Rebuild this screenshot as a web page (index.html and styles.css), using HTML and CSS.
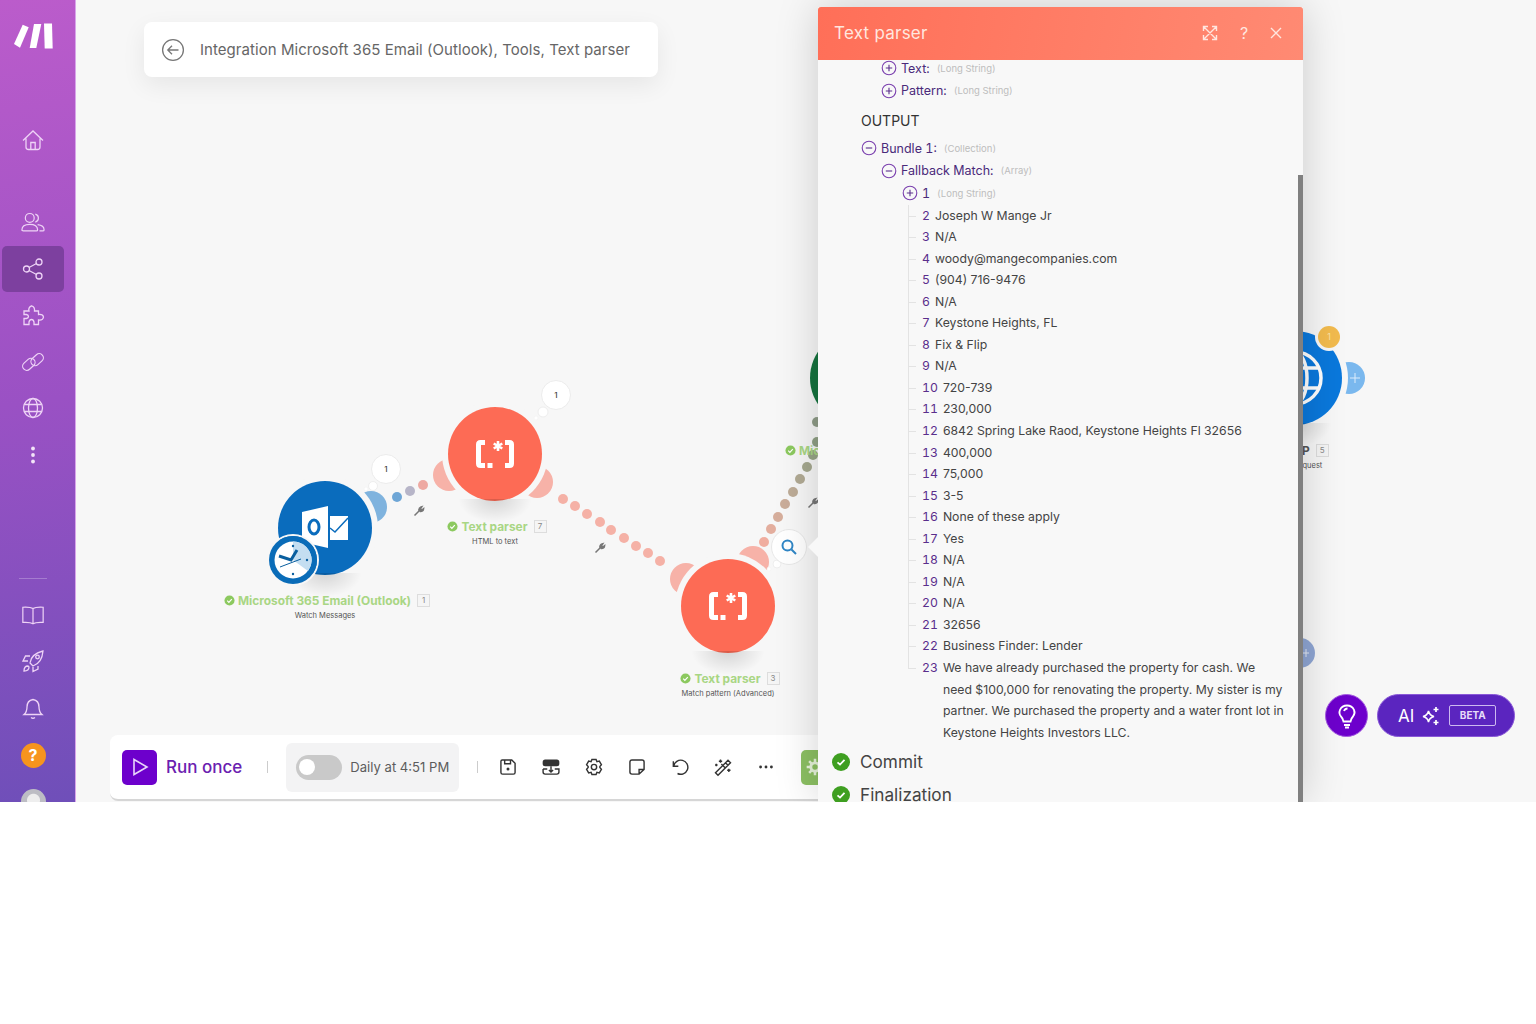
FILE: index.html
```html
<!DOCTYPE html>
<html lang="en">
<head>
    <meta charset="UTF-8">
    <title>Integration Microsoft 365 Email (Outlook), Tools, Text parser</title>
    <link rel="stylesheet" href="styles.css">
</head>
<body>
    <svg class="sprites" width="0" height="0">
        <symbol id="regex" viewBox="0 0 40 40">
            <path d="M10 8.500H5.500Q3.500 8.500 3.500 10.500V29.500Q3.500 31.500 5.500 31.500H10" fill="none" stroke="#fff" stroke-width="5"/>
            <path d="M30 8.500H34.500Q36.500 8.500 36.500 10.500V29.500Q36.500 31.500 34.500 31.500H30" fill="none" stroke="#fff" stroke-width="5"/>
            <rect x="12.500" y="29" width="5" height="5" fill="#fff"/>
            <path d="M23 7V17M18.700 9.500L27.300 14.500M27.300 9.500L18.700 14.500" stroke="#fff" stroke-width="2.600"/>
        </symbol>
        <symbol id="wrench" viewBox="0 0 12 12">
            <path d="M1.500 10.500L6.500 5.500M6 6.200Q5.400 3.200 8 2L8.800 1.800L7.500 3.800L8.800 5L10.600 3.600Q10.400 6.800 6.800 6.400" fill="#777" stroke="#777" stroke-width="1.500"/>
        </symbol>
        <symbol id="check" viewBox="0 0 12 12">
            <circle cx="6" cy="6" r="5.500" fill="#8cc95f"/>
            <path d="M3.500 6.200L5.300 8L8.500 4.500" fill="none" stroke="#fff" stroke-width="1.300"/>
        </symbol>
        <symbol id="tree-plus" viewBox="0 0 16 16">
            <circle cx="8" cy="8" r="6.800" fill="none" stroke="#7a3fae" stroke-width="1.100"/>
            <path d="M4.800 8H11.200M8 4.800V11.200" stroke="#5a2e8c" stroke-width="1.100"/>
        </symbol>
        <symbol id="tree-minus" viewBox="0 0 16 16">
            <circle cx="8" cy="8" r="6.800" fill="none" stroke="#7a3fae" stroke-width="1.100"/>
            <path d="M4.800 8H11.200" stroke="#5a2e8c" stroke-width="1.100"/>
        </symbol>
        <symbol id="done" viewBox="0 0 18 18">
            <circle cx="9" cy="9" r="9" fill="#3f9f21"/>
            <path d="M5.500 9.300L8 11.600L12.500 6.800" fill="none" stroke="#fff" stroke-width="1.800"/>
        </symbol>
    </svg>

    <div class="app">
        <nav class="sidebar">
            <svg class="logo" width="40" height="27" viewBox="0 0 40 27">
                <path d="M8.700 1.700L14.700 4.300L6 24.700L0 21Z" fill="#fff"/>
                <path d="M20 1L27.300 1L22.300 25L15.700 25Z" fill="#fff"/>
                <path d="M30 0.500L38 0.500L38.700 25.500L30.700 25.500Z" fill="#fff"/>
            </svg>
            <a class="side-item side-home">
                <svg viewBox="0 1 24 24"><path d="M2 12.500L12 3L22 12.500M5 10.500V19Q5 21.500 7.500 21.500H16.500Q19 21.500 19 19V10.500M9.800 21.500V14.500H14.200V21.500"/></svg>
            </a>
            <a class="side-item side-first">
                <svg viewBox="0 1 26 24"><circle cx="9.500" cy="7.500" r="4.800"/><path d="M15.500 3.300A4.500 4.500 0 0 1 15.500 12M1 20.500Q1 14.500 9.500 14.500T18 20.500Q18 21.500 16.500 21.500H2.500Q1 21.500 1 20.500ZM18 14.800Q25 15.500 25 20.500Q25 21.500 23.500 21.500H20"/></svg>
            </a>
            <a class="side-item side-active">
                <svg viewBox="0 0 24 24"><circle cx="5.500" cy="12" r="3"/><circle cx="18" cy="5" r="3"/><circle cx="18" cy="19" r="3"/><path d="M8 10.500L15.500 6.500M8 13.500L15.500 17.500"/></svg>
            </a>
            <a class="side-item">
                <svg viewBox="0 0 24 24"><path d="M3 8H8Q7 4.500 10.500 2.800Q14 3.500 13.500 8H17.500V11.500Q22 11 22.500 14Q22 17.500 17.500 17V21.500H13V19Q12.500 16.500 10.500 16.500T8 19V21.500H3V15.500H5.500Q7.500 15 7.500 13.500T5.500 11.500H3Z"/></svg>
            </a>
            <a class="side-item">
                <svg viewBox="0 0 26 24"><rect x="1" y="10" width="15" height="9" rx="4.500" transform="rotate(-42 8.500 14.500)"/><rect x="10" y="5" width="15" height="9" rx="4.500" transform="rotate(-42 17.500 9.500)"/></svg>
            </a>
            <a class="side-item">
                <svg viewBox="0 0 24 24"><circle cx="12" cy="12" r="9.500"/><ellipse cx="12" cy="12" rx="4.500" ry="9.500"/><path d="M3.200 8.500H20.800M3.200 15.500H20.800"/></svg>
            </a>
            <a class="side-item">
                <svg viewBox="0 0 24 24"><circle cx="12" cy="5.500" r="1.900" class="solid"/><circle cx="12" cy="12" r="1.900" class="solid"/><circle cx="12" cy="18.500" r="1.900" class="solid"/></svg>
            </a>
            <hr class="side-rule">
            <a class="side-item">
                <svg viewBox="0 1 26 24"><path d="M13 5Q10 3 2 3.500V20Q10 19.500 13 21.500Q16 19.500 24 20V3.500Q16 3 13 5ZM13 5V21.500"/></svg>
            </a>
            <a class="side-item">
                <svg viewBox="0 1 24 24"><path d="M9 14Q10 5 22 2Q21 14 12 17ZM9 7H4.500L2 12H7M17 17V20L12 22.500V18"/><circle cx="16.500" cy="8" r="1.800"/><path d="M7 17Q3 17 3 22Q8 22 8 18Z"/></svg>
            </a>
            <a class="side-item">
                <svg viewBox="0 1 24 24"><path d="M3 18.500Q6 16 6 11Q6 4.500 12 3.500Q18 4.500 18 11Q18 16 21 18.500ZM10 21.500Q12 23 14 21.500"/></svg>
            </a>
            <a class="side-item">
                <span class="help-dot">?</span>
            </a>
            <span class="avatar"></span>
        </nav>

        <main class="canvas">
            <header class="crumb">
                <svg width="24" height="24" viewBox="0 0 24 24" fill="none" stroke="#777" stroke-width="1.300"><circle cx="12" cy="12" r="10.400"/><path d="M17.500 12H7M11 7.800L6.800 12L11 16.200"/></svg>
                <span>Integration Microsoft 365 Email (Outlook), Tools, Text parser</span>
            </header>

            <svg class="wires" width="1460" height="802" viewBox="0 0 1460 802">
                <g fill="#7fb3de"><circle cx="295" cy="507" r="16"/></g>
                <g fill="#f7b2a8">
                    <circle cx="373" cy="475" r="16"/>
                    <circle cx="461" cy="482" r="16"/>
                    <circle cx="610" cy="579" r="16"/>
                    <circle cx="677" cy="562" r="16"/>
                </g>
                <circle cx="321" cy="497" r="5" fill="#6ea6d6"/>
                <circle cx="334" cy="491" r="5" fill="#b7b5c8"/>
                <circle cx="347" cy="485" r="5" fill="#eea9a2"/>
                <g fill="#f5b1a6">
                    <circle cx="487" cy="499" r="5"/>
                    <circle cx="499" cy="506" r="5"/>
                    <circle cx="511" cy="514" r="5"/>
                    <circle cx="524" cy="522" r="5"/>
                    <circle cx="535" cy="530" r="5"/>
                    <circle cx="548" cy="538" r="5"/>
                    <circle cx="560" cy="546" r="5"/>
                    <circle cx="572" cy="553" r="5"/>
                    <circle cx="584" cy="561" r="5"/>
                </g>
                <circle cx="688" cy="542" r="5" fill="#f0ad9f"/>
                <circle cx="695" cy="529" r="5" fill="#e3ae9e"/>
                <circle cx="702" cy="517" r="5" fill="#d6ae9c"/>
                <circle cx="709" cy="504" r="5" fill="#caad9a"/>
                <circle cx="717" cy="492" r="5" fill="#bdac97"/>
                <circle cx="724" cy="479" r="5" fill="#b1aa94"/>
                <circle cx="731" cy="467" r="5" fill="#a5a88f"/>
                <circle cx="737" cy="455" r="5" fill="#98a588"/>
                <circle cx="741" cy="442" r="5" fill="#90a085"/>
                <circle cx="741" cy="422" r="5" fill="#8f9c88"/>
                <use href="#wrench" x="337" y="505" width="12" height="12"/>
                <use href="#wrench" x="518" y="542" width="12" height="12"/>
                <use href="#wrench" x="731" y="497" width="12" height="12"/>
                <circle cx="701" cy="564" r="4" fill="#fff" stroke="#eee"/>
                <circle cx="693" cy="569" r="2" fill="#fff" stroke="#eee" stroke-width="0.500"/>
                <circle cx="467" cy="412" r="5" fill="#fff" stroke="#eee"/>
                <circle cx="460" cy="418" r="2" fill="#fff" stroke="#eee" stroke-width="0.500"/>
                <circle cx="297" cy="486" r="4.500" fill="#fff" stroke="#eee"/>
                <circle cx="290" cy="489" r="2" fill="#fff" stroke="#eee" stroke-width="0.500"/>
                <circle cx="1273" cy="378" r="16" fill="#7ab8ee"/>
                <path d="M1274 378H1284M1279 373V383" stroke="#dcecfb" stroke-width="1"/>
                <circle cx="1224" cy="653" r="15" fill="#8fa6d4"/>
                <path d="M1226 653H1233M1230 649V657" stroke="#e3e9f5" stroke-width="1"/>
            </svg>

            <section class="node node-outlook">
                <div class="disc disc-blue">
                    <svg width="94" height="94" viewBox="0 0 94 94">
                        <path d="M24 31L50 25V67L24 61Z" fill="#fff"/>
                        <ellipse cx="36" cy="46" rx="5" ry="7" fill="none" stroke="#0a6cbd" stroke-width="3"/>
                        <path d="M52 35H70V59H52Z" fill="#fff"/>
                        <path d="M52 47L57 51L70 37" fill="none" stroke="#0a6cbd" stroke-width="1.500"/>
                    </svg>
                </div>
                <div class="clock">
                    <svg width="48" height="48" viewBox="0 0 48 48">
                        <circle cx="24" cy="24" r="24" fill="#0a6cb8"/>
                        <circle cx="24" cy="24" r="18.500" fill="#fff"/>
                        <path d="M24 24V5.500A18.500 18.500 0 0 1 39 35Z" fill="#c4def1"/>
                        <path d="M10 20L22 24L28 14" fill="none" stroke="#0a5f9f" stroke-width="3"/>
                        <path d="M11 31L32 23" stroke="#0a5f9f" stroke-width="1"/>
                        <circle cx="24" cy="10" r="1.200" fill="#0a5f9f"/>
                        <circle cx="38" cy="24" r="1.200" fill="#0a5f9f"/>
                        <circle cx="24" cy="38" r="1.200" fill="#0a5f9f"/>
                    </svg>
                </div>
                <div class="node-title">
                    <svg width="11" height="11"><use href="#check"/></svg>
                    <span>Microsoft 365 Email (Outlook)</span>
                    <b class="node-id">1</b>
                </div>
                <div class="node-sub">Watch Messages</div>
            </section>

            <section class="node node-parser-one">
                <div class="disc disc-red"><svg width="40" height="40"><use href="#regex"/></svg></div>
                <div class="node-title">
                    <svg width="11" height="11"><use href="#check"/></svg>
                    <span>Text parser</span>
                    <b class="node-id">7</b>
                </div>
                <div class="node-sub">HTML to text</div>
            </section>

            <section class="node node-parser-two">
                <div class="disc disc-red"><svg width="40" height="40"><use href="#regex"/></svg></div>
                <div class="node-title">
                    <svg width="11" height="11"><use href="#check"/></svg>
                    <span>Text parser</span>
                    <b class="node-id">3</b>
                </div>
                <div class="node-sub">Match pattern (Advanced)</div>
            </section>

            <section class="node node-excel">
                <div class="disc disc-green"></div>
                <div class="node-title">
                    <svg width="11" height="11"><use href="#check"/></svg>
                    <span>Mic</span>
                </div>
            </section>

            <section class="node node-http">
                <div class="disc disc-azure">
                    <svg width="60" height="60" viewBox="0 0 60 60" fill="none" stroke="#fff" stroke-width="3.500">
                        <circle cx="30" cy="30" r="26"/>
                        <ellipse cx="30" cy="30" rx="12" ry="26"/>
                        <path d="M6 20H54M6 40H54M30 4V56"/>
                    </svg>
                </div>
                <span class="badge-warn">1</span>
                <div class="node-title node-title-dark">
                    <span>HTTP</span>
                    <b class="node-id">5</b>
                </div>
                <div class="node-sub">Make a request</div>
            </section>

            <div class="bubble bubble-outlook">1</div>
            <div class="bubble bubble-parser">1</div>
            <div class="bubble-search">
                <svg width="18" height="18" viewBox="0 0 18 18" fill="none" stroke="#2f86c6" stroke-width="2"><circle cx="7.500" cy="7.500" r="5"/><path d="M11.500 11.500L16 16"/></svg>
            </div>

            <footer class="toolbar">
                <button class="run-btn">
                    <svg width="18" height="20" viewBox="0 0 18 20" fill="none" stroke="#e8d4fa" stroke-width="1.600"><path d="M3 2.500L16 10L3 17.500Z"/></svg>
                </button>
                <span class="run-label">Run once</span>
                <i class="tool-sep"></i>
                <div class="schedule">
                    <span class="toggle"><span class="knob"></span></span>
                    <span>Daily at 4:51 PM</span>
                </div>
                <i class="tool-sep tool-sep-short"></i>
                <div class="tool-icons">
                    <svg viewBox="0 0 24 24"><path d="M5 3.500H16.500L20.500 7.500V18.500Q20.500 20.500 18.500 20.500H5.500Q3.500 20.500 3.500 18.500V5Q3.500 3.500 5 3.500ZM8 3.500V8H15V3.500"/><circle cx="12" cy="14.500" r="1.800" class="solid"/></svg>
                    <svg viewBox="0 0 24 24"><rect x="2" y="3" width="20" height="8" rx="3" class="solid"/><path d="M2.500 14.500V18Q2.500 20.500 5 20.500H19Q21.500 20.500 21.500 18V14.500H16.500M7.500 14.500H2.500M12 11V18M9.500 15.500L12 18L14.500 15.500"/></svg>
                    <svg viewBox="0 0 24 24"><path d="M9.500 3H14.500L15.500 5.700L18.400 5L20.900 9.300L19 11.500V12.500L20.900 14.700L18.400 19L15.500 18.300L14.500 21H9.500L8.500 18.300L5.600 19L3.100 14.700L5 12.500V11.500L3.100 9.300L5.600 5L8.500 5.700Z"/><circle cx="12" cy="12" r="3.200"/></svg>
                    <svg viewBox="0 0 24 24"><path d="M6 3.500H18Q20.500 3.500 20.500 6V15L14.500 20.500H6Q3.500 20.500 3.500 18V6Q3.500 3.500 6 3.500ZM14.500 20.500V15H20.500"/></svg>
                    <svg viewBox="0 0 24 24"><path d="M4 5V11H10M4.500 11A8.500 8.500 0 1 1 9 19.800"/></svg>
                    <svg viewBox="0 0 24 24"><path d="M3 19L18 4L21 7L6 22ZM15 7L18 10M14.500 13L10 8.500M9 3V7M7 5H11M19 14V18M17 16H21M4 8V11M2.500 9.500H5.500"/></svg>
                    <svg viewBox="0 0 24 24"><circle cx="5.500" cy="12" r="1.700" class="solid"/><circle cx="12" cy="12" r="1.700" class="solid"/><circle cx="18.500" cy="12" r="1.700" class="solid"/></svg>
                </div>
                <button class="green-btn">
                    <svg width="20" height="20" viewBox="0 0 24 24" fill="none" stroke="#e6f3da" stroke-width="3.500"><circle cx="12" cy="12" r="5"/><path d="M12 2V6M12 18V22M2 12H6M18 12H22M5 5L8 8M16 16L19 19M19 5L16 8M8 16L5 19" stroke-width="3"/></svg>
                </button>
            </footer>

            <div class="helpers">
                <button class="idea-btn">
                    <svg width="24" height="26" viewBox="0 0 24 26" fill="none" stroke="#fff" stroke-width="1.800"><path d="M8.500 18.500Q8 15.500 6 13.500Q3.500 10.500 5 6.800Q7 2.500 12 2.500T19 6.800Q20.500 10.500 18 13.500Q16 15.500 15.500 18.500Z"/><path d="M9 22H15M10 24.500H14M9 8Q10 5.500 12.500 5.500"/></svg>
                </button>
                <button class="ai-btn">
                    <span>AI</span>
                    <svg width="20" height="20" viewBox="0 0 20 20" fill="none" stroke="#fff" stroke-width="1.500"><path d="M7.500 5Q8.500 9.500 13 10.500Q8.500 11.500 7.500 16Q6.500 11.500 2 10.500Q6.500 9.500 7.500 5Z"/><path d="M15 1V6M12.500 3.500H17.500M15 14V19M12.500 16.500H17.500" stroke-width="1.700"/></svg>
                    <em class="beta">BETA</em>
                </button>
            </div>

            <aside class="panel">
                <header class="panel-head">
                    <h2>Text parser</h2>
                    <div class="panel-actions">
                        <svg viewBox="0 0 16 16"><path d="M1.500 6V1.500H6M10 1.500H14.500V6M14.500 10V14.500H10M6 14.500H1.500V10M2 2L14 14M14 2L2 14"/></svg>
                        <span class="panel-q">?</span>
                        <svg viewBox="0 0 16 16"><path d="M3 3L13 13M13 3L3 13"/></svg>
                    </div>
                </header>
                <div class="panel-body">
                    <div class="tree-row indent-1">
                        <svg class="tree-icon"><use href="#tree-plus"/></svg>
                        <span class="key">Text:</span><span class="type">(Long String)</span>
                    </div>
                    <div class="tree-row indent-1">
                        <svg class="tree-icon"><use href="#tree-plus"/></svg>
                        <span class="key">Pattern:</span><span class="type">(Long String)</span>
                    </div>
                    <div class="section-name">OUTPUT</div>
                    <div class="tree-row indent-0">
                        <svg class="tree-icon"><use href="#tree-minus"/></svg>
                        <span class="key">Bundle 1:</span><span class="type">(Collection)</span>
                    </div>
                    <div class="tree-row indent-1">
                        <svg class="tree-icon"><use href="#tree-minus"/></svg>
                        <span class="key">Fallback Match:</span><span class="type">(Array)</span>
                    </div>
                    <div class="tree-row indent-2">
                        <svg class="tree-icon"><use href="#tree-plus"/></svg>
                        <span class="key">1</span><span class="type">(Long String)</span>
                    </div>
                    <ul class="values">
                        <li><b>2</b><span>Joseph W Mange Jr</span></li>
                        <li><b>3</b><span>N/A</span></li>
                        <li><b>4</b><span>woody@mangecompanies.com</span></li>
                        <li><b>5</b><span>(904) 716-9476</span></li>
                        <li><b>6</b><span>N/A</span></li>
                        <li><b>7</b><span>Keystone Heights, FL</span></li>
                        <li><b>8</b><span>Fix &amp; Flip</span></li>
                        <li><b>9</b><span>N/A</span></li>
                        <li><b>10</b><span>720-739</span></li>
                        <li><b>11</b><span>230,000</span></li>
                        <li><b>12</b><span>6842 Spring Lake Raod, Keystone Heights Fl 32656</span></li>
                        <li><b>13</b><span>400,000</span></li>
                        <li><b>14</b><span>75,000</span></li>
                        <li><b>15</b><span>3-5</span></li>
                        <li><b>16</b><span>None of these apply</span></li>
                        <li><b>17</b><span>Yes</span></li>
                        <li><b>18</b><span>N/A</span></li>
                        <li><b>19</b><span>N/A</span></li>
                        <li><b>20</b><span>N/A</span></li>
                        <li><b>21</b><span>32656</span></li>
                        <li><b>22</b><span>Business Finder: Lender</span></li>
                        <li><b>23</b><span>We have already purchased the property for cash. We need $100,000 for renovating the property. My sister is my partner. We purchased the property and a water front lot in Keystone Heights Investors LLC.</span></li>
                    </ul>
                    <div class="phase"><svg width="18" height="18"><use href="#done"/></svg><span>Commit</span></div>
                    <div class="phase"><svg width="18" height="18"><use href="#done"/></svg><span>Finalization</span></div>
                </div>
                <i class="scroll-thumb"></i>
            </aside>
            <i class="panel-pointer"></i>
        </main>
    </div>
</body>
</html>
```

FILE: styles.css
```css
* {
    box-sizing: border-box;
}

body {
    margin: 0;
    background: #fff;
    font-family: 'Inter', 'Liberation Sans', sans-serif;
    color: #444;
}

.sprites {
    position: absolute;
}

.app {
    display: flex;
    height: 802px;
    overflow: hidden;
}

/* left navigation */
.sidebar {
    flex: 0 0 76px;
    display: flex;
    flex-direction: column;
    align-items: flex-start;
    padding: 23px 0 0 2px;
    background: linear-gradient(172deg, #bb5ccb 0%, #9a51c4 50%, #6f4fb9 100%);
    border-right: 1px solid #d9a5ea;
    overflow: hidden;
}

.logo {
    margin-left: 12px;
    flex: none;
}

.side-item {
    flex: none;
    display: flex;
    align-items: center;
    justify-content: center;
    width: 62px;
    height: 46.4px;
    border-radius: 5px;
}

.side-item svg {
    width: 24px;
    height: 24px;
    fill: none;
    stroke: #eed3f6;
    stroke-width: 1.3;
}

.side-item svg .solid {
    fill: #f3e4f8;
    stroke: none;
}

.side-home {
    margin-top: 68px;
}

.side-first {
    margin-top: 35px;
}

.side-active {
    background: #7d409f;
}

.side-rule {
    flex: none;
    width: 28px;
    height: 1px;
    margin: 100px 0 14px 17px;
    border: 0;
    background: rgba(255, 255, 255, 0.25);
}

.help-dot {
    width: 25px;
    height: 25px;
    border-radius: 50%;
    background: #f7941d;
    color: #fff;
    font-size: 16px;
    font-weight: 700;
    line-height: 25px;
    text-align: center;
}

.avatar {
    flex: none;
    width: 25px;
    height: 25px;
    margin: 11px 0 0 19px;
    border-radius: 50%;
    background: radial-gradient(circle at 50% 45%, #eee 0 6px, #bdbdc4 7px);
}

/* free canvas */
.canvas {
    position: relative;
    flex: 1;
    background: #f7f7f7;
    overflow: hidden;
}

.crumb {
    position: absolute;
    left: 68px;
    top: 22px;
    display: flex;
    align-items: center;
    gap: 15px;
    width: 514px;
    height: 55px;
    padding-left: 17px;
    background: #fff;
    border-radius: 8px;
    box-shadow: 0 8px 24px rgba(0, 0, 0, 0.07);
    font-size: 15px;
    letter-spacing: 0.05px;
    color: #666;
    white-space: nowrap;
}

.wires {
    position: absolute;
    left: 0;
    top: 0;
}

.node {
    position: absolute;
    display: flex;
    flex-direction: column;
    align-items: center;
    width: 94px;
}

.node-outlook {
    left: 202px;
    top: 481px;
}

.node-parser-one {
    left: 372px;
    top: 407px;
}

.node-parser-two {
    left: 605px;
    top: 559px;
}

.node-excel {
    left: 734px;
    top: 331px;
    align-items: flex-start;
}

.node-http {
    left: 1172px;
    top: 331px;
}

.disc {
    position: relative;
    display: flex;
    flex: none;
    align-items: center;
    justify-content: center;
    width: 94px;
    height: 94px;
    border-radius: 50%;
    box-shadow: 0 0 0 6px #f7f7f7;
}

/* soft shadow below a node */
.disc::after {
    content: "";
    position: absolute;
    left: 10px;
    top: 92px;
    width: 74px;
    height: 24px;
    background: radial-gradient(ellipse at center top, rgba(0, 0, 0, 0.14), rgba(0, 0, 0, 0) 70%);
}

.disc-blue {
    background: #0a6cbd;
}

.disc-red {
    background: #fd6b55;
}

.disc-green {
    background: #16743f;
}

.disc-azure {
    background: #0a78dc;
}

.clock {
    position: absolute;
    left: -9px;
    top: 55px;
    width: 48px;
    height: 48px;
    border-radius: 50%;
    box-shadow: 0 0 0 2px #f7f7f7;
}

.node-title {
    display: flex;
    align-items: center;
    gap: 3px;
    height: 14px;
    margin-top: 18px;
    margin-left: 4px;
    font-size: 11.9px;
    font-weight: 700;
    color: #a9d684;
    white-space: nowrap;
}

.node-title svg {
    flex: none;
}

.node-title-dark {
    margin-left: 16px;
    color: #555;
}

.node-id {
    width: 13px;
    height: 13px;
    margin-left: 3px;
    border: 1px solid #ddd;
    background: #f5f5f5;
    color: #888;
    font-size: 8px;
    font-weight: 400;
    line-height: 11px;
    text-align: center;
}

.node-sub {
    margin-top: 2px;
    font-size: 7.5px;
    line-height: 13px;
    color: #555;
    white-space: nowrap;
}

.node-excel .node-title {
    margin-left: -25px;
}

.badge-warn {
    position: absolute;
    left: 70px;
    top: -5px;
    width: 22px;
    height: 22px;
    border-radius: 50%;
    background: #f2bb4e;
    box-shadow: 0 0 0 3px #f7f7f7;
    color: #fbe3a8;
    font-size: 9px;
    line-height: 22px;
    text-align: center;
}

.bubble {
    position: absolute;
    width: 30px;
    height: 30px;
    border-radius: 50%;
    background: #fff;
    border: 1px solid #ececec;
    font-size: 8px;
    font-weight: 500;
    line-height: 28px;
    text-align: center;
    color: #444;
}

.bubble-outlook {
    left: 295px;
    top: 454px;
}

.bubble-parser {
    left: 465px;
    top: 380px;
}

.bubble-search {
    position: absolute;
    left: 695px;
    top: 529px;
    display: flex;
    align-items: center;
    justify-content: center;
    width: 36px;
    height: 36px;
    border-radius: 50%;
    background: #fff;
    border: 1px solid #e8e8e8;
}

/* bottom bar */
.toolbar {
    position: absolute;
    left: 34px;
    top: 735px;
    display: flex;
    align-items: center;
    width: 760px;
    height: 66px;
    padding: 0 0 0 12px;
    background: #fff;
    border-bottom: 2px solid #d6d6d6;
    border-radius: 8px;
}

.run-btn {
    display: flex;
    flex: none;
    align-items: center;
    justify-content: center;
    width: 35px;
    height: 35px;
    padding: 0;
    border: 0;
    border-radius: 5px;
    background: #6d00cc;
}

.run-label {
    margin-left: 9px;
    font-size: 17px;
    font-weight: 500;
    color: #6a20b0;
}

.tool-sep {
    flex: none;
    width: 1px;
    height: 12px;
    margin: 0 18px 0 25px;
    background: #ccc;
}

.tool-sep-short {
    margin: 0 20px 0 18px;
}

.schedule {
    display: flex;
    align-items: center;
    gap: 8px;
    width: 173px;
    height: 49px;
    padding-left: 10px;
    border-radius: 6px;
    background: #f3f3f4;
    font-size: 13.1px;
    color: #5c5c5c;
    white-space: nowrap;
}

.toggle {
    display: flex;
    align-items: center;
    flex: none;
    width: 46px;
    height: 25px;
    padding-left: 3px;
    border-radius: 13px;
    background: #c9c9c9;
}

.knob {
    width: 16px;
    height: 16px;
    border-radius: 50%;
    background: #fff;
}

.tool-icons {
    display: flex;
    gap: 23px;
}

.tool-icons svg {
    width: 20px;
    height: 20px;
    fill: none;
    stroke: #333;
    stroke-width: 1.7;
}

.tool-icons svg .solid {
    fill: #333;
    stroke: none;
}

.green-btn {
    display: flex;
    align-items: center;
    flex: none;
    width: 30px;
    height: 35px;
    margin-left: 25px;
    padding: 0 0 0 4px;
    border: 0;
    border-radius: 5px 0 0 5px;
    background: #8cc063;
}

/* floating buttons on the right */
.helpers {
    position: absolute;
    left: 1249px;
    top: 694px;
    display: flex;
    gap: 9px;
}

.idea-btn {
    display: flex;
    align-items: center;
    justify-content: center;
    width: 43px;
    height: 43px;
    padding: 0;
    border: 1px solid #a45be0;
    border-radius: 50%;
    background: #6d00cc;
}

.ai-btn {
    display: flex;
    align-items: center;
    gap: 7px;
    width: 138px;
    height: 43px;
    padding: 0 0 0 20px;
    border: 1px solid #8a58d8;
    border-radius: 22px;
    background: #5b25bf;
    color: #fff;
    font-family: inherit;
    font-size: 17px;
}

.beta {
    width: 47px;
    height: 21px;
    margin-left: 1px;
    border: 1px solid #cdb9f0;
    border-radius: 2px;
    color: #e6dcf8;
    font-size: 10px;
    font-style: normal;
    font-weight: 700;
    line-height: 19px;
    text-align: center;
}

/* module output panel */
.panel {
    position: absolute;
    left: 742px;
    top: 7px;
    width: 485px;
    height: 795px;
    background: #f8f8f8;
    box-shadow: 0 0 40px rgba(0, 0, 0, 0.18);
    overflow: hidden;
}

/* small pointer towards the inspected bubble */
.panel-pointer {
    position: absolute;
    left: 732px;
    top: 537px;
    border-style: solid;
    border-width: 10px 10px 10px 0;
    border-color: transparent #f8f8f8 transparent transparent;
}

.panel-head {
    position: relative;
    z-index: 1;
    display: flex;
    align-items: center;
    justify-content: space-between;
    height: 53px;
    padding: 0 19px 1px 16px;
    border-radius: 3px 3px 0 0;
    background: linear-gradient(100deg, #ff6f58 0%, #ff8a73 100%);
}

.panel-head h2 {
    margin: 0;
    font-size: 17px;
    font-weight: 400;
    letter-spacing: 0.25px;
    color: #ffe6df;
}

.panel-actions {
    display: flex;
    align-items: center;
    gap: 18px;
}

.panel-actions svg {
    width: 16px;
    height: 16px;
    fill: none;
    stroke: #ffe6df;
    stroke-width: 1.4;
}

.panel-q {
    width: 16px;
    margin-right: -2px;
    color: #ffe6df;
    font-size: 16px;
    text-align: center;
}

.panel-body {
    margin-top: -3px;
    padding-left: 14px;
}

.tree-row {
    display: flex;
    align-items: center;
    height: 22.5px;
    font-size: 12.5px;
    font-variant-numeric: tabular-nums;
}

.tree-icon {
    flex: none;
    width: 16px;
    height: 16px;
    margin-right: 4px;
}

.indent-0 {
    padding-left: 29px;
}

.indent-1 {
    padding-left: 49px;
}

.indent-2 {
    padding-left: 70px;
}

.key {
    color: #4a2a7a;
}

.type {
    margin-left: 7px;
    font-size: 9.5px;
    color: #bdbdbd;
}

.section-name {
    height: 22px;
    margin: 8px 0 5px 29px;
    font-size: 14px;
    line-height: 22px;
    color: #333;
}

.values {
    margin: 0 0 2px 76px;
    padding: 0 17px 0 14px;
    list-style: none;
    font-size: 12.25px;
    line-height: 21.55px;
}

.values li {
    position: relative;
    display: flex;
    gap: 5px;
}

/* tree guide, elbow into each row */
.values li::before {
    content: "";
    position: absolute;
    left: -14px;
    top: 0;
    width: 7px;
    height: 11px;
    border-left: 1px solid #e3e3e3;
    border-bottom: 1px solid #e3e3e3;
}

.values li:not(:last-child)::after {
    content: "";
    position: absolute;
    left: -14px;
    top: 0;
    height: 100%;
    border-left: 1px solid #e3e3e3;
}

.values b {
    flex: none;
    font-weight: 400;
    font-variant-numeric: tabular-nums;
    color: #5a2e8c;
}

.values span {
    color: #444;
}

.phase {
    display: flex;
    align-items: center;
    gap: 10px;
    height: 33px;
    font-size: 17.2px;
    color: #444;
}

.scroll-thumb {
    position: absolute;
    right: 0;
    top: 168px;
    width: 5px;
    height: 627px;
    background: #808080;
}
```
